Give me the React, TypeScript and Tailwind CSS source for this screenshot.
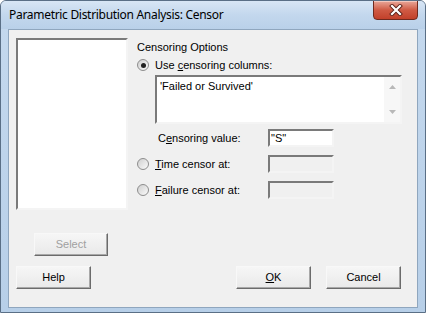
import React from "react";

function Radio({ checked }: { checked?: boolean }) {
  return (
    <span className="w-[12px] h-[12px] rounded-full border border-[#8d8d8d] bg-gradient-to-br from-[#cfcfcf] to-[#fbfbfb] flex items-center justify-center shrink-0">
      {checked && <span className="w-[5px] h-[5px] rounded-full bg-[#222]" />}
    </span>
  );
}

function Btn({ children, disabled, w = "w-[75px]" }: { children: React.ReactNode; disabled?: boolean; w?: string }) {
  return (
    <div
      className={`${w} h-[23px] flex items-center justify-center border border-t-[#f8f8f8] border-l-[#f8f8f8] border-r-[#6b6b6b] border-b-[#6b6b6b] shadow-[inset_-1px_-1px_0_#a8a8a8] bg-gradient-to-b from-[#f6f6f6] to-[#e9e9e9] text-[11px] ${disabled ? "text-[#a0a0a0]" : "text-black"}`}
    >
      {children}
    </div>
  );
}

function Field({ value, disabled }: { value?: string; disabled?: boolean }) {
  return (
    <div
      className={`w-[66px] h-[18px] border-2 border-t-[#7a7a7a] border-l-[#7a7a7a] border-r-[#f4f4f4] border-b-[#f4f4f4] ${disabled ? "bg-[#f0f0f0]" : "bg-white"} text-[11px] leading-[14px] pl-[1px] text-black`}
    >
      {value}
    </div>
  );
}

export default function App() {
  return (
    <div className="w-[426px] h-[313px] relative overflow-hidden bg-gradient-to-b from-[#c5d9ee] to-[#b7cfe8] border border-[#5a6f86] rounded-t-[6px] font-['Liberation_Sans',Arial,sans-serif] text-[11px] text-black">
      {/* title bar */}
      <div className="h-[28px] flex items-center pl-[8px] bg-gradient-to-b from-[#d8e6f5] via-[#c3d7ed] to-[#b9d0e9]">
        <span className="text-[12px] text-black font-['Noto_Sans',sans-serif] tracking-[-0.3px]">Parametric Distribution Analysis: Censor</span>
      </div>
      <div className="absolute right-[7px] top-[-1px] w-[45px] h-[20px] rounded-b-[4px] border border-[#6f2a1f] bg-gradient-to-b from-[#e8a79a] via-[#cf5a44] to-[#c2402a] flex items-center justify-center shadow-[inset_0_1px_0_#f3c7bd]">
        <svg width="14" height="12" viewBox="0 0 14 12">
          <path d="M3 2 L11 10 M11 2 L3 10" stroke="#5a2018" strokeWidth="4" strokeLinecap="square" />
          <path d="M3 2 L11 10 M11 2 L3 10" stroke="#ffffff" strokeWidth="2.2" strokeLinecap="square" />
        </svg>
      </div>

      {/* client area */}
      <div className="mx-[7px] h-[279px] border border-[#8fa6be] bg-[#f0f0f0] flex flex-col">
        <div className="flex pt-[8px] pl-[7px] h-[235px]">
          {/* left column */}
          <div className="w-[112px] flex flex-col">
            <div className="h-[172px] border-2 border-t-[#7a7a7a] border-l-[#7a7a7a] border-r-[#f4f4f4] border-b-[#f4f4f4] bg-white" />
            <div className="mt-[23px] ml-[18px]">
              <Btn disabled w="w-[74px]">Select</Btn>
            </div>
          </div>
          {/* right column */}
          <div className="ml-[9px] flex flex-col">
            <div className="h-[14px] mt-[2px] leading-[14px]">Censoring Options</div>
            <div className="flex items-center h-[14px] mt-[4px] gap-[6px]">
              <Radio checked />
              <span>
                Use <u>c</u>ensoring columns:
              </span>
            </div>
            <div className="ml-[18px] mt-[3px] w-[247px] h-[49px] border-2 border-t-[#7a7a7a] border-l-[#7a7a7a] border-r-[#f4f4f4] border-b-[#f4f4f4] bg-white flex">
              <div className="flex-1 pl-[3px] pt-[2px] leading-[14px]">'Failed or Survived'</div>
              <div className="w-[16px] flex flex-col items-center justify-between py-[8px] bg-[#f7f7f7]">
                <svg width="7" height="4" viewBox="0 0 7 4">
                  <path d="M0 4 L3.5 0 L7 4 Z" fill="#b8b8b8" />
                </svg>
                <svg width="7" height="4" viewBox="0 0 7 4">
                  <path d="M0 0 L3.5 4 L7 0 Z" fill="#b8b8b8" />
                </svg>
              </div>
            </div>
            <div className="flex items-center h-[18px] mt-[5px]">
              <span className="w-[131px] pl-[21px]">
                C<u>e</u>nsoring value:
              </span>
              <Field value={'"S"'} />
            </div>
            <div className="flex items-center h-[18px] mt-[8px]">
              <div className="w-[131px] flex items-center gap-[6px]">
                <Radio />
                <span>
                  <u>T</u>ime censor at:
                </span>
              </div>
              <Field disabled />
            </div>
            <div className="flex items-center h-[18px] mt-[8px]">
              <div className="w-[131px] flex items-center gap-[6px]">
                <Radio />
                <span>
                  <u>F</u>ailure censor at:
                </span>
              </div>
              <Field disabled />
            </div>
          </div>
        </div>
        {/* bottom buttons */}
        <div className="flex pl-[7px] mt-[1px]">
          <Btn>Help</Btn>
          <div className="ml-[145px]">
            <Btn>
              <u>O</u>K
            </Btn>
          </div>
          <div className="ml-[15px]">
            <Btn>Cancel</Btn>
          </div>
        </div>
      </div>
    </div>
  );
}
